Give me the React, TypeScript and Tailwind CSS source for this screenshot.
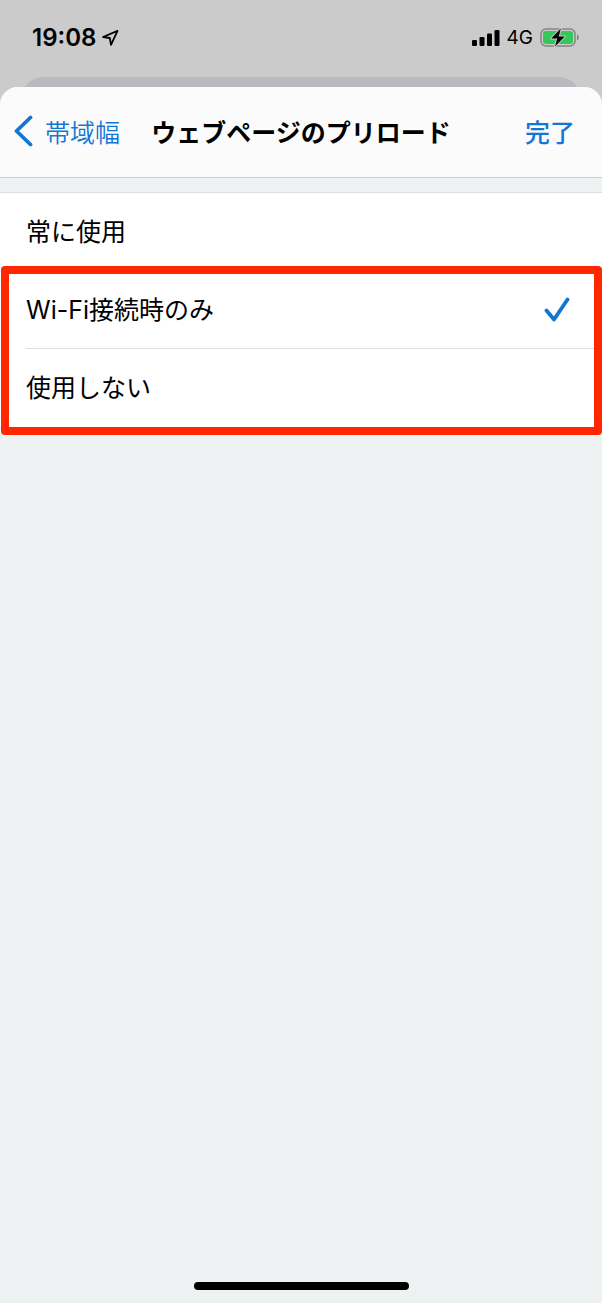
import { useState } from "react";

const options = [
  { id: "always", label: "常に使用" },
  { id: "wifi", label: "Wi-Fi接続時のみ" },
  { id: "never", label: "使用しない" },
];

function StatusBar() {
  return (
    <div className="flex h-[77px] items-start justify-between pl-8 pr-[22px] pt-6 text-black">
      <div className="flex items-center gap-[5px]">
        <span className="font-['Inter','Noto_Sans_CJK_JP',sans-serif] text-[24px] font-semibold leading-7">
          19:08
        </span>
        <svg width="18" height="18" viewBox="0 0 18 18" fill="none" aria-hidden="true">
          <path
            d="M16.5 1.8 2 8l6.8 1L10 15.8z"
            stroke="currentColor"
            strokeWidth="1.8"
            strokeLinejoin="round"
          />
        </svg>
      </div>
      <div className="flex h-7 items-center gap-[7px]">
        <svg width="28" height="18" viewBox="0 0 28 18" fill="currentColor" aria-hidden="true">
          <rect x="0" y="11" width="5" height="6" rx="1.2" />
          <rect x="7.5" y="8" width="5" height="9" rx="1.2" />
          <rect x="15" y="4.5" width="5" height="12.5" rx="1.2" />
          <rect x="22.5" y="1" width="5" height="16" rx="1.2" />
        </svg>
        <span className="font-['Inter','Noto_Sans_CJK_JP',sans-serif] text-[19px] leading-7">4G</span>
        <svg width="40" height="20" viewBox="0 0 40 20" aria-hidden="true">
          <rect x="1" y="1" width="34" height="17" rx="5" fill="none" stroke="#858585" strokeWidth="1.5" />
          <rect x="3" y="3" width="30" height="13" rx="3" fill="#34c759" />
          <path d="M37 6.5c2.4.8 2.4 5.2 0 6z" fill="#858585" />
          <path
            d="M20.8 0.6 11.2 10.6h6L15 18.4l9.8-10h-6z"
            fill="#000"
            stroke="#cbcbcb"
            strokeWidth="2"
            strokeLinejoin="round"
            paintOrder="stroke"
          />
        </svg>
      </div>
    </div>
  );
}

function Header() {
  return (
    <header className="grid h-[91px] grid-cols-[1fr_auto_1fr] items-center border-b border-[#cbcdcf] bg-[#fbfbfc] px-[13px] pb-[2px] text-[25px] leading-9">
      <button type="button" className="flex items-center gap-3 justify-self-start font-[350] text-[#1276d3]">
        <svg width="20" height="32" viewBox="0 0 20 32" fill="none" aria-hidden="true">
          <path
            d="M17.5 2.5 3.5 16l14 13.5"
            stroke="currentColor"
            strokeWidth="3.8"
            strokeLinecap="round"
            strokeLinejoin="round"
          />
        </svg>
        帯域幅
      </button>
      <h1 className="whitespace-nowrap font-bold text-black">ウェブページのプリロード</h1>
      <button type="button" className="justify-self-end pr-[14px] font-medium text-[#1276d3]">
        完了
      </button>
    </header>
  );
}

export default function App() {
  const [selected, setSelected] = useState("wifi");

  return (
    <div className="flex min-h-screen flex-col bg-[#cbcbcb] font-['Noto_Sans_CJK_JP',sans-serif]">
      <StatusBar />
      {/* card of the screen behind the sheet */}
      <div className="mx-5 -mb-[14px] h-6 rounded-t-[24px] bg-[#b9babe]" />

      <div className="relative flex grow flex-col overflow-hidden rounded-t-[18px] bg-[#eef2f3]">
        <Header />
        <main className="mt-[14px]">
          <div
            role="radiogroup"
            aria-label="ウェブページのプリロード"
            className="relative border-y border-[#dcdfe1] bg-white"
          >
            <div className="divide-y divide-[#dcdfe1] pl-[26px]">
              {options.map((option) => (
                <label
                  key={option.id}
                  htmlFor={option.id}
                  className="flex h-[78px] cursor-pointer items-center justify-between pr-8 text-[25px] font-normal leading-9 text-black"
                >
                  <span className="font-['Inter','Noto_Sans_CJK_JP',sans-serif]">{option.label}</span>
                  <input
                    id={option.id}
                    type="radio"
                    name="preload"
                    className="sr-only"
                    checked={selected === option.id}
                    onChange={() => setSelected(option.id)}
                  />
                  {selected === option.id && (
                    <svg width="26" height="26" viewBox="0 0 26 26" fill="none" aria-hidden="true">
                      <path
                        d="M2.5 13.5 10 22.5 23.5 2.5"
                        stroke="#1276d3"
                        strokeWidth="3.8"
                        strokeLinecap="round"
                        strokeLinejoin="round"
                      />
                    </svg>
                  )}
                </label>
              ))}
            </div>
            {/* red frame around the last two rows */}
            <div className="pointer-events-none absolute -bottom-2 left-px right-0 top-[73px] rounded-[4px] border-8 border-[#ff2600]" />
          </div>
        </main>
        <div className="mx-auto mb-[13px] mt-auto h-2 w-[215px] rounded-full bg-black" />
      </div>
    </div>
  );
}
